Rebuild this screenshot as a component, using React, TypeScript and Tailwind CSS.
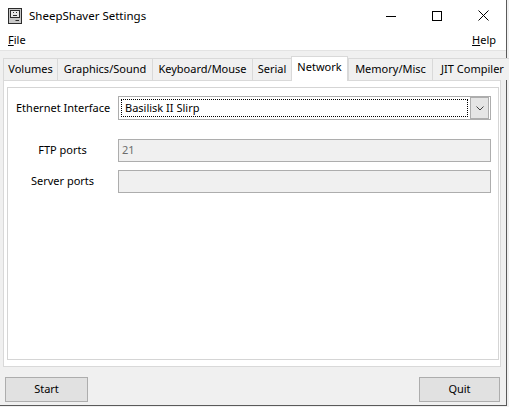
const tabs = [
  { label: "Volumes", w: "w-[54px]" },
  { label: "Graphics/Sound", w: "w-[95px]" },
  { label: "Keyboard/Mouse", w: "w-[100px]" },
  { label: "Serial", w: "w-[39px]" },
  { label: "Network", w: "w-[57px]", active: true },
  { label: "Memory/Misc", w: "w-[84px]" },
  { label: "JIT Compiler", w: "w-[80px]" },
];

const MacIcon = () => (
  <svg width="14" height="16" viewBox="0 0 14 16" className="shrink-0">
    <rect x="0.5" y="0.5" width="13" height="15" fill="#c8c8c8" stroke="#2b2b2b" />
    <rect x="2.5" y="2.5" width="9" height="7" fill="#e8e8e8" stroke="#2b2b2b" />
    <rect x="5" y="4" width="1" height="1" fill="#2b2b2b" />
    <rect x="8" y="4" width="1" height="1" fill="#2b2b2b" />
    <path d="M5 7.5 H9" stroke="#2b2b2b" />
    <path d="M7.5 12.5 H11" stroke="#2b2b2b" />
  </svg>
);

export default function App() {
  return (
    <div
      className="w-[509px] h-[407px] bg-[#f0f0f0] overflow-hidden text-[11px] text-black"
      style={{ fontFamily: '"Segoe UI", "Noto Sans", sans-serif' }}
    >
      <div className="w-[507px] h-[406px] flex flex-col border-r border-b border-[#5a5a5a]">
        {/* title bar */}
        <div className="h-[31px] bg-white flex items-center pl-[8px]">
          <MacIcon />
          <span className="ml-[7px] text-[11.5px]">SheepShaver Settings</span>
          <div className="ml-auto flex items-center h-full">
            <div className="w-[46px] h-full flex items-center justify-center">
              <svg width="10" height="10" viewBox="0 0 10 10">
                <path d="M0 5.5 H10" stroke="#000" />
              </svg>
            </div>
            <div className="w-[46px] h-full flex items-center justify-center">
              <svg width="10" height="10" viewBox="0 0 10 10">
                <rect x="0.5" y="0.5" width="9" height="9" fill="none" stroke="#000" />
              </svg>
            </div>
            <div className="w-[46px] h-full flex items-center justify-center">
              <svg width="11" height="11" viewBox="0 0 11 11">
                <path d="M0.5 0.5 L10.5 10.5 M10.5 0.5 L0.5 10.5" stroke="#000" />
              </svg>
            </div>
          </div>
        </div>

        {/* menu bar */}
        <div className="h-[20px] bg-white flex items-center justify-between px-[8px] border-b border-[#e3e3e3]">
          <span><span className="underline">F</span>ile</span>
          <span className="mr-[2px]"><span className="underline">H</span>elp</span>
        </div>

        {/* tabs */}
        <div className="mt-[4px] h-[25px] flex items-end pl-[3px] relative z-10">
          {tabs.map((t) =>
            t.active ? (
              <div
                key={t.label}
                className={`${t.w} shrink-0 h-[25px] bg-white border-x border-t border-[#d9d9d9] flex items-center justify-center -mb-[1px] pb-[3px]`}
              >
                {t.label}
              </div>
            ) : (
              <div
                key={t.label}
                className={`${t.w} shrink-0 h-[22px] bg-[#f0f0f0] border-l border-t border-[#d9d9d9] flex items-center justify-center whitespace-nowrap overflow-hidden`}
              >
                {t.label}
              </div>
            )
          )}
        </div>

        {/* tab panel */}
        <div className="ml-[3px] w-[498px] h-[287px] bg-white border border-[#d9d9d9] pt-[6px] pl-[3px]">
          <div className="w-[492px] h-[273px] border border-[#d5d5d5] pt-[8px] pl-[8px]">
            <div className="flex items-center h-[24px]">
              <div className="w-[93px] text-center whitespace-nowrap">Ethernet Interface</div>
              <div className="ml-[9px] w-[373px] h-[24px] border border-[#adadad] bg-white flex items-center p-[2px]">
                <div className="flex-1 h-[18px] border border-dotted border-black flex items-center pl-[3px]">
                  Basilisk II Slirp
                </div>
                <div className="ml-[2px] w-[19px] h-[22px] -mr-[1px] bg-[#e5e5e5] border border-[#adadad] flex items-center justify-center">
                  <svg width="8" height="5" viewBox="0 0 8 5">
                    <path d="M0.5 0.5 L4 4 L7.5 0.5" fill="none" stroke="#404040" />
                  </svg>
                </div>
              </div>
            </div>

            <div className="flex items-center h-[23px] mt-[19px]">
              <div className="w-[93px] text-center">FTP ports</div>
              <div className="ml-[9px] w-[373px] h-[23px] border border-[#adadad] bg-[#f0f0f0] flex items-center pl-[3px] text-[#6d6d6d]">
                21
              </div>
            </div>

            <div className="flex items-center h-[23px] mt-[8px]">
              <div className="w-[93px] text-center">Server ports</div>
              <div className="ml-[9px] w-[373px] h-[23px] border border-[#adadad] bg-[#f0f0f0]" />
            </div>
          </div>
        </div>

        {/* buttons */}
        <div className="mt-[10px] flex justify-between pl-[5px] pr-[6px]">
          <button className="w-[83px] h-[25px] bg-[#e1e1e1] border border-[#adadad] flex items-center justify-center">
            Start
          </button>
          <button className="w-[81px] h-[25px] bg-[#e1e1e1] border border-[#adadad] flex items-center justify-center">
            Quit
          </button>
        </div>
      </div>
    </div>
  );
}
